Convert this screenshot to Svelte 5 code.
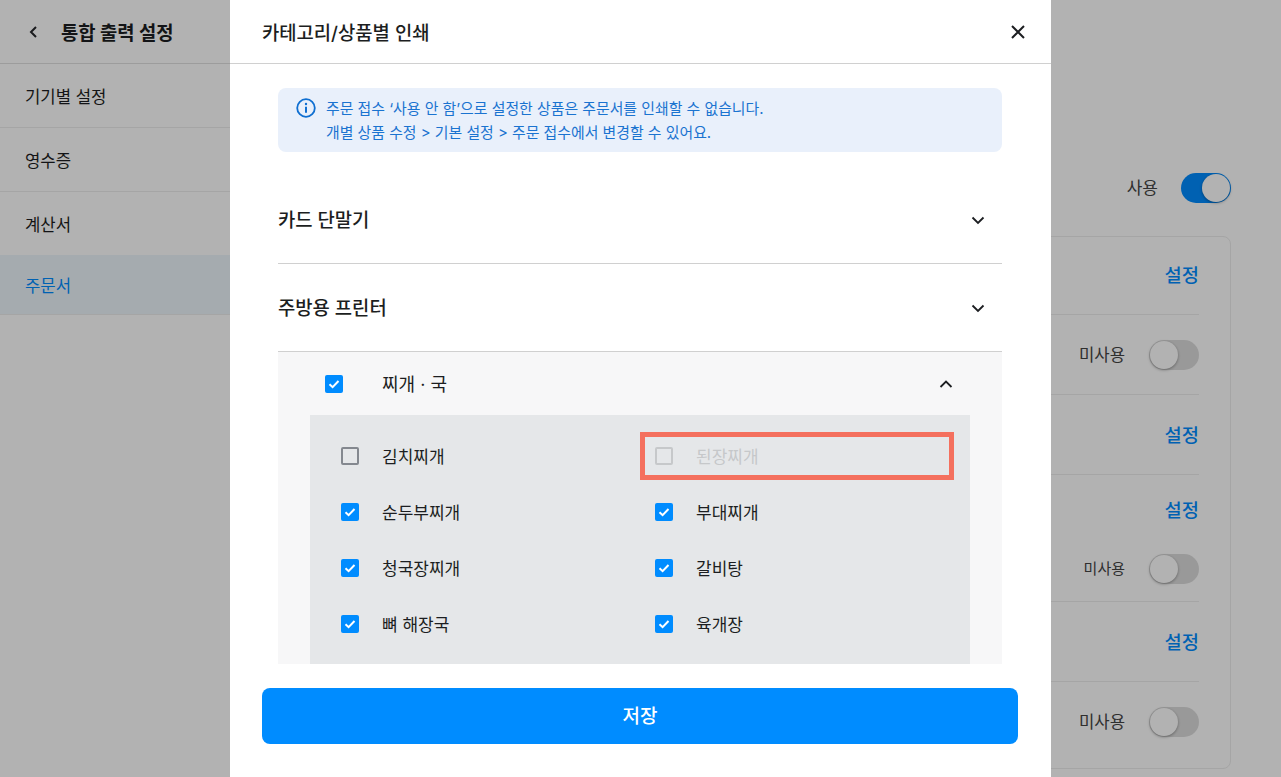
<script lang="ts">
  const menu = [
    { label: '기기별 설정', active: false },
    { label: '영수증', active: false },
    { label: '계산서', active: false },
    { label: '주문서', active: true },
  ];

  const devices = [
    { kind: 'first', link: true, toggle: false, small: false },
    { kind: '', link: false, toggle: true, small: false },
    { kind: '', link: true, toggle: false, small: false },
    { kind: 'tall', link: true, toggle: true, small: true },
    { kind: '', link: true, toggle: false, small: false },
    { kind: '', link: false, toggle: true, small: false },
  ];

  const items = [
    { name: '김치찌개', checked: false, disabled: false },
    { name: '된장찌개', checked: false, disabled: true },
    { name: '순두부찌개', checked: true, disabled: false },
    { name: '부대찌개', checked: true, disabled: false },
    { name: '청국장찌개', checked: true, disabled: false },
    { name: '갈비탕', checked: true, disabled: false },
    { name: '뼈 해장국', checked: true, disabled: false },
    { name: '육개장', checked: true, disabled: false },
  ];
</script>

{#snippet chevron(up: boolean)}
  <svg class="chevron" viewBox="0 0 16 16" width="16" height="16" fill="none" aria-hidden="true">
    <path d={up ? 'M2.5 11 8 5.5l5.5 5.5' : 'M2.5 5.5 8 11l5.5-5.5'} stroke="#1c1e21" stroke-width="1.8" />
  </svg>
{/snippet}

{#snippet checkbox(checked: boolean, disabled: boolean)}
  <span class="box" class:checked class:disabled>
    {#if checked}
      <svg viewBox="0 0 18 18" width="18" height="18" fill="none" aria-hidden="true">
        <path d="M4.5 9.3 7.6 12.2 13.5 6" stroke="#fff" stroke-width="2" />
      </svg>
    {/if}
  </span>
{/snippet}

<div class="page">
  <aside class="sidebar">
    <header class="side-head">
      <svg viewBox="0 0 12 16" width="12" height="16" fill="none" aria-hidden="true">
        <path d="M9 3 4 8l5 5" stroke="#26282b" stroke-width="2" />
      </svg>
      <h1>통합 출력 설정</h1>
    </header>
    {#each menu as m}
      <div class="side-row" class:active={m.active}>{m.label}</div>
    {/each}
  </aside>

  <main class="main">
    <div class="use-line">
      <span class="use-label">사용</span>
      <span class="toggle on"><i></i></span>
    </div>
    <section class="card">
      {#each devices as d}
        <div class="row {d.kind}">
          {#if d.link}<span class="link">설정</span>{/if}
          {#if d.toggle}
            <div class="use-state" class:small={d.small}>
              <span class="use-text">미사용</span>
              <span class="toggle"><i></i></span>
            </div>
          {/if}
        </div>
      {/each}
    </section>
  </main>

  <div class="dim"></div>

  <div class="modal">
    <header class="modal-head">
      <h2>카테고리/상품별 인쇄</h2>
      <svg viewBox="0 0 16 16" width="16" height="16" fill="none" aria-hidden="true">
        <path d="M2 2l12 12M14 2 2 14" stroke="#1c1e21" stroke-width="2" />
      </svg>
    </header>

    <div class="modal-body">
      <div class="notice">
        <svg viewBox="0 0 20 20" width="20" height="20" fill="none" aria-hidden="true">
          <circle cx="10" cy="10" r="8.8" stroke="#0f6fd1" stroke-width="1.8" />
          <circle cx="10" cy="6" r="1.2" fill="#0f6fd1" />
          <path d="M10 8.8v6" stroke="#0f6fd1" stroke-width="2" />
        </svg>
        <p>주문 접수 ‘사용 안 함’으로 설정한 상품은 주문서를 인쇄할 수 없습니다.<br />개별 상품 수정 &gt; 기본 설정 &gt; 주문 접수에서 변경할 수 있어요.</p>
      </div>

      <div class="acc top">
        <span class="acc-title">카드 단말기</span>
        {@render chevron(false)}
      </div>
      <div class="acc">
        <span class="acc-title">주방용 프린터</span>
        {@render chevron(false)}
      </div>

      <div class="category">
        <div class="cat-head">
          {@render checkbox(true, false)}
          <span class="cat-name">찌개 · 국</span>
          {@render chevron(true)}
        </div>
        <div class="panel">
          {#each items as item}
            <div class="item" class:off={item.disabled}>
              {@render checkbox(item.checked, item.disabled)}
              <span class="item-name">{item.name}</span>
            </div>
          {/each}
        </div>
      </div>
    </div>

    <footer class="modal-foot">
      <button type="button">저장</button>
    </footer>
  </div>
</div>

<style>
  :global(body) {
    background: #fff;
  }
  .page {
    position: relative;
    display: flex;
    height: 777px;
    overflow: hidden;
    font-family: Inter, 'Noto Sans CJK KR', sans-serif;
    color: #1c1e21;
  }
  .sidebar {
    width: 230px;
    flex: none;
    background: #fff;
  }
  .side-head {
    display: flex;
    align-items: center;
    gap: 22px;
    height: 63px;
    padding-left: 27px;
    border-bottom: 1px solid #e0e0e0;
  }
  h1 {
    margin: 0;
    font-size: 18.8px;
    font-weight: 700;
  }
  .side-row {
    display: flex;
    align-items: center;
    height: 63px;
    padding-left: 25px;
    font-size: 16.7px;
    border-bottom: 1px solid #ececec;
  }
  .side-row.active {
    height: 59px;
    margin-top: -1px;
    background: #ecf5fb;
    color: #008cff;
  }
  .main {
    flex: 1;
    padding-right: 50px;
    padding-left: 30px;
  }
  .use-line {
    display: flex;
    align-items: center;
    justify-content: flex-end;
    gap: 23px;
    height: 30px;
    margin-top: 173px;
    font-size: 17px;
    color: #444;
  }
  .use-label {
    padding-bottom: 3px;
  }
  .card {
    margin-top: 33px;
    padding: 0 31px 6px 0;
    border: 1px solid #ececec;
    border-radius: 8px;
  }
  .row {
    display: flex;
    flex-direction: column;
    align-items: flex-end;
    justify-content: center;
    height: 80px;
    border-bottom: 1px solid #ececec;
    box-sizing: border-box;
  }
  .row:last-child {
    border-bottom: none;
  }
  .row.first {
    height: 78px;
    padding-bottom: 2px;
  }
  .row.tall {
    height: 127px;
    gap: 30px;
    padding-top: 2px;
  }
  .link {
    padding-bottom: 2px;
    font-size: 18.7px;
    font-weight: 500;
    color: #008cff;
  }
  .use-state {
    display: flex;
    align-items: center;
    gap: 24px;
    font-size: 16.7px;
    color: #444;
  }
  .use-state.small {
    font-size: 15px;
  }
  .use-text {
    padding-bottom: 2px;
  }
  .toggle {
    display: flex;
    align-items: center;
    box-sizing: border-box;
    width: 50px;
    height: 30px;
    padding: 1px;
    border-radius: 15px;
    background: #dcdcdc;
  }
  .toggle.on {
    justify-content: flex-end;
    background: #008cff;
  }
  .toggle i {
    width: 28px;
    height: 28px;
    border-radius: 50%;
    background: #fff;
    box-shadow: 0 1px 3px rgba(0, 0, 0, 0.35);
  }
  .dim {
    position: absolute;
    inset: 0;
    background: rgba(0, 0, 0, 0.3);
  }
  .modal {
    position: absolute;
    top: 0;
    bottom: 0;
    left: 230px;
    width: 821px;
    display: flex;
    flex-direction: column;
    background: #fff;
  }
  .modal-head {
    display: flex;
    align-items: center;
    justify-content: space-between;
    flex: none;
    height: 63px;
    padding: 0 25px 0 32px;
    border-bottom: 1px solid #d0d0d0;
  }
  h2 {
    margin: 0;
    font-size: 18.8px;
    font-weight: 500;
  }
  .modal-body {
    flex: 1;
    min-height: 0;
    overflow: hidden;
    padding: 24px 49px 0 48px;
  }
  .notice {
    display: flex;
    align-items: flex-start;
    gap: 10px;
    height: 64px;
    box-sizing: border-box;
    padding: 10px 18px;
    border-radius: 8px;
    background: #e9f0fb;
    color: #1a73d0;
  }
  .notice svg {
    flex: none;
  }
  .notice p {
    margin: -1px 0 0;
    font-size: 14.9px;
    line-height: 24px;
  }
  .acc {
    display: flex;
    align-items: center;
    justify-content: space-between;
    height: 88px;
    padding: 0 16px 0 0;
    font-size: 18.8px;
    font-weight: 500;
    border-bottom: 1px solid #d0d0d0;
    box-sizing: border-box;
  }
  .acc.top {
    height: 112px;
    padding-top: 24px;
  }
  .acc-title {
    padding-bottom: 3px;
  }
  .category {
    padding: 0 32px;
    background: #f7f7f8;
  }
  .cat-head {
    display: flex;
    align-items: center;
    height: 63px;
    padding: 0 16px 0 15px;
    font-size: 18px;
  }
  .cat-name {
    flex: 1;
    margin-left: 39px;
    padding-bottom: 2px;
  }
  .panel {
    display: grid;
    grid-template-columns: 314px 1fr;
    grid-auto-rows: 56px;
    padding: 13px 0 40px;
    background: #e5e7e9;
  }
  .item {
    position: relative;
    display: flex;
    align-items: center;
    gap: 23px;
    padding-left: 31px;
    font-size: 17px;
  }
  .item-name {
    padding-bottom: 2px;
  }
  .item.off {
    color: #c6c8ca;
  }
  .item.off::after {
    content: '';
    position: absolute;
    top: 4px;
    left: 16px;
    width: 314px;
    height: 48px;
    box-sizing: border-box;
    border: 5px solid #f4705e;
  }
  .box {
    display: block;
    flex: none;
    width: 18px;
    height: 18px;
    box-sizing: border-box;
    border: 2px solid #84888f;
    border-radius: 2px;
  }
  .box.checked {
    border: none;
    background: #008cff;
  }
  .box.disabled {
    border-color: #c6c8ca;
  }
  .box svg {
    display: block;
  }
  .modal-foot {
    flex: none;
    padding: 24px 33px 33px 32px;
  }
  button {
    display: block;
    width: 100%;
    height: 56px;
    padding-bottom: 4px;
    border: none;
    border-radius: 8px;
    background: #008cff;
    color: #fff;
    font: inherit;
    font-size: 19px;
    font-weight: 500;
  }
</style>
